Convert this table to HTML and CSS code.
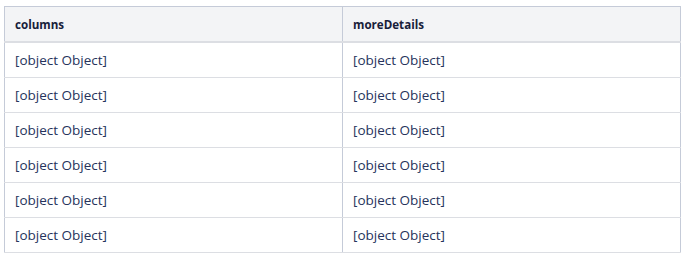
FILE: index.html
```html
<!DOCTYPE html>
<html>
<head>
<meta charset="utf-8">
<link rel="stylesheet" href="styles.css">
</head>
<body>
<div class="wrap">
<table class="tbl">
  <thead>
    <tr><th>columns</th><th>moreDetails</th></tr>
  </thead>
  <tbody>
    <tr><td>[object Object]</td><td>[object Object]</td></tr>
    <tr><td>[object Object]</td><td>[object Object]</td></tr>
    <tr><td>[object Object]</td><td>[object Object]</td></tr>
    <tr><td>[object Object]</td><td>[object Object]</td></tr>
    <tr><td>[object Object]</td><td>[object Object]</td></tr>
    <tr><td>[object Object]</td><td>[object Object]</td></tr>
  </tbody>
</table>
</div>
</body>
</html>
```
FILE: styles.css
```css
html, body {
  margin: 0;
  padding: 0;
  background: #ffffff;
}
.wrap {
  padding: 6px 6px 0 4px;
}
.tbl {
  width: 677px;
  border-collapse: collapse;
  font-family: "Open Sans", "Noto Sans", sans-serif;
  font-size: 13.5px;
  border-left: 1px solid #c5cbd8;
  border-right: 1px solid #c5cbd8;
  border-top: 1px solid #c5cbd8;
}
.tbl th {
  background: #f3f4f6;
  color: #17203a;
  font-weight: 700;
  font-size: 11.6px;
  text-align: left;
  height: 34px;
  padding: 0 10px;
  border-bottom: 2px solid #dcdee3;
}
.tbl th + th, .tbl td + td {
  border-left: 1px solid #c5cbd8;
}
.tbl td {
  color: #26335c;
  height: 34px;
  padding: 0 10px;
  border-bottom: 1px solid #dcdee3;
  width: 50%;
}
```
